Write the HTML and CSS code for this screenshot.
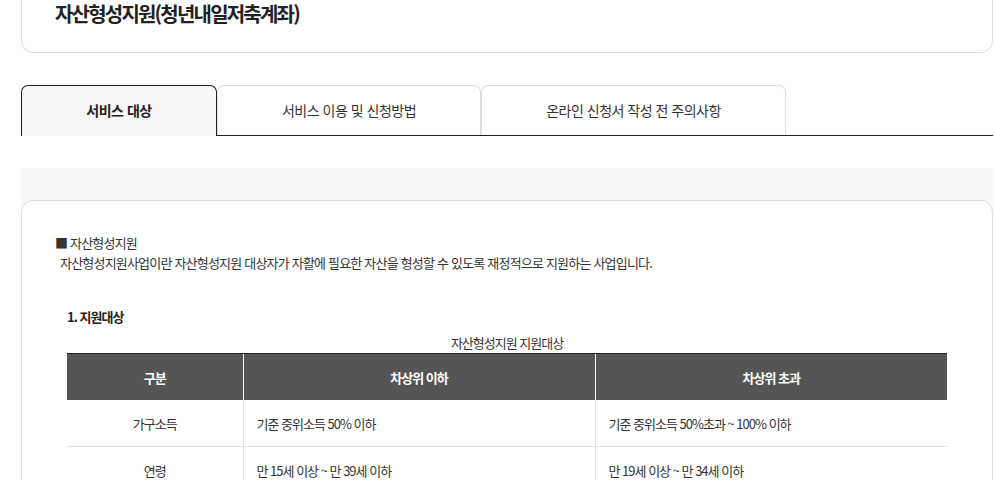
FILE: index.html
```html
<!DOCTYPE html>
<html lang="ko">
<head>
  <meta charset="UTF-8">
  <meta name="viewport" content="width=device-width, initial-scale=1.0">
  <title>자산형성지원(청년내일저축계좌)</title>
  <link rel="stylesheet" href="styles.css">
</head>
<body>

<div class="wrap">
  <div class="top-card">
    <h1>자산형성지원(청년내일저축계좌)</h1>
  </div>

  <ul class="tabs">
    <li class="tab active">서비스 대상</li>
    <li class="tab">서비스 이용 및 신청방법</li>
    <li class="tab">온라인 신청서 작성 전 주의사항</li>
  </ul>

  <div class="section">
    <div class="card">
      <p class="intro-title">■ 자산형성지원</p>
      <p class="intro-text">자산형성지원사업이란 자산형성지원 대상자가 자활에 필요한 자산을 형성할 수 있도록 재정적으로 지원하는 사업입니다.</p>

      <div class="block">
        <h3>1. 지원대상</h3>
        <table class="info-table">
          <caption>자산형성지원 지원대상</caption>
          <colgroup>
            <col class="c1">
            <col class="c2">
            <col class="c3">
          </colgroup>
          <thead>
            <tr>
              <th>구분</th>
              <th>차상위 이하</th>
              <th>차상위 초과</th>
            </tr>
          </thead>
          <tbody>
            <tr>
              <td class="center">가구소득</td>
              <td>기준 중위소득 50% 이하</td>
              <td>기준 중위소득 50%초과 ~ 100% 이하</td>
            </tr>
            <tr>
              <td class="center">연령</td>
              <td>만 15세 이상 ~ 만 39세 이하</td>
              <td>만 19세 이상 ~ 만 34세 이하</td>
            </tr>
          </tbody>
        </table>
      </div>
    </div>
  </div>
</div>

</body>
</html>
```

FILE: styles.css
```css
body {
  margin: 0;
  font-family: "Noto Sans CJK KR", "Noto Sans", sans-serif;
  color: #333;
  background: #fff;
  overflow: hidden;
}
.wrap {
  padding: 0 2px 0 21px;
}
.top-card {
  margin-top: -30px;
  padding: 28px 33px 23px;
  border: 1px solid #ddd;
  border-radius: 12px;
}
.top-card h1 {
  margin: 0;
  font-size: 20px;
  line-height: 30px;
  font-weight: 700;
  color: #222;
  letter-spacing: -1.8px;
}
.tabs {
  display: flex;
  list-style: none;
  margin: 32px 0 0;
  padding: 0;
  border-bottom: 1px solid #222;
}
.tab {
  height: 49px;
  line-height: 49px;
  text-align: center;
  font-size: 14px;
  color: #333;
  border: 1px solid #ddd;
  border-bottom: none;
  border-radius: 7px 7px 0 0;
  letter-spacing: -0.5px;
}
.tab:nth-child(1) {
  width: 194px;
}
.tab:nth-child(2) {
  width: 262px;
}
.tab:nth-child(3) {
  width: 303px;
}
.tab.active {
  height: 50px;
  margin-bottom: -1px;
  background: #f7f7f7;
  border-color: #222;
  font-weight: 700;
  color: #222;
}
.section {
  margin-top: 32px;
  padding-top: 32px;
  background: #f7f7f7;
}
.card {
  height: 300px;
  padding: 32px 33px 0;
  background: #fff;
  border: 1px solid #ddd;
  border-radius: 12px 12px 0 0;
}
.intro-title,
.intro-text {
  margin: 0;
  font-size: 13px;
  line-height: 20px;
  letter-spacing: -0.8px;
}
.intro-text {
  padding-left: 5px;
}
.block {
  margin-top: 34px;
  padding-left: 12px;
}
.block h3 {
  margin: 0;
  font-size: 13px;
  line-height: 20px;
  font-weight: 700;
  color: #222;
  letter-spacing: -1px;
}
.info-table {
  width: 880px;
  margin-top: 6px;
  border-collapse: collapse;
  table-layout: fixed;
  font-size: 13px;
  letter-spacing: -1px;
}
.info-table caption {
  line-height: 20px;
}
.c1 {
  width: 176px;
}
.c2,
.c3 {
  width: 352px;
}
.info-table th {
  height: 46px;
  padding: 0;
  background: #555;
  color: #fff;
  font-weight: 700;
  border-top: 1px solid #222;
  border-left: 1px solid #fff;
}
.info-table th:first-child {
  border-left: none;
}
.info-table td {
  height: 46px;
  padding: 0 13px;
  border-bottom: 1px solid #e3e3e3;
  border-left: 1px solid #e3e3e3;
}
.info-table td:first-child {
  border-left: none;
}
.info-table td.center {
  text-align: center;
}
```
